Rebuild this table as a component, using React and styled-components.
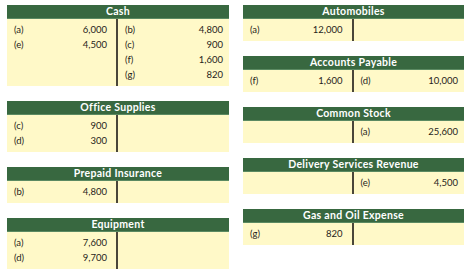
import styled, { createGlobalStyle } from "styled-components";

const GlobalStyle = createGlobalStyle`
  html, body {
    margin: 0;
    padding: 0;
    background: #ffffff;
  }
  body {
    font-family: "Lato", "Open Sans", sans-serif;
  }
`;

const Page = styled.div`
  display: grid;
  grid-template-columns: 222px 221px;
  column-gap: 14px;
  padding: 5px 0 0 7px;
  width: 472px;
  height: 278px;
  box-sizing: border-box;
`;

const Column = styled.div`
  display: flex;
  flex-direction: column;
  gap: 15px;
`;

const Card = styled.div`
  display: flex;
  flex-direction: column;
`;

const Header = styled.div`
  height: 13px;
  line-height: 13px;
  background: #386840;
  border-bottom: 1px solid #5b8a62;
  color: #ffffff;
  font-size: 10.5px;
  font-weight: 700;
  text-align: center;
  letter-spacing: 0.3px;
`;

const Body = styled.div`
  display: grid;
  grid-template-columns: 1fr 1fr;
  background: #fff9c8;
`;

const Side = styled.div`
  padding: 3px ${(p) => (p.$left ? "9px" : "6px")} 4px 7px;
  border-right: ${(p) => (p.$left ? "2px solid #4a463a" : "none")};
  min-height: 15px;
`;

const Row = styled.div`
  display: flex;
  justify-content: space-between;
  height: 15px;
  line-height: 15px;
  font-size: 9.5px;
  color: #1f1e1a;
`;

const entries = (list) =>
  list.map(([label, amount]) => (
    <Row key={label}>
      <span>{label}</span>
      <span>{amount}</span>
    </Row>
  ));

function TAccount({ title, debits = [], credits = [] }) {
  return (
    <Card>
      <Header>{title}</Header>
      <Body>
        <Side $left>{entries(debits)}</Side>
        <Side>{entries(credits)}</Side>
      </Body>
    </Card>
  );
}

export default function App() {
  return (
    <>
      <GlobalStyle />
      <Page>
        <Column>
          <TAccount
            title="Cash"
            debits={[
              ["(a)", "6,000"],
              ["(e)", "4,500"],
            ]}
            credits={[
              ["(b)", "4,800"],
              ["(c)", "900"],
              ["(f)", "1,600"],
              ["(g)", "820"],
            ]}
          />
          <TAccount
            title="Office Supplies"
            debits={[
              ["(c)", "900"],
              ["(d)", "300"],
            ]}
          />
          <TAccount title="Prepaid Insurance" debits={[["(b)", "4,800"]]} />
          <TAccount
            title="Equipment"
            debits={[
              ["(a)", "7,600"],
              ["(d)", "9,700"],
            ]}
          />
        </Column>
        <Column>
          <TAccount title="Automobiles" debits={[["(a)", "12,000"]]} />
          <TAccount
            title="Accounts Payable"
            debits={[["(f)", "1,600"]]}
            credits={[["(d)", "10,000"]]}
          />
          <TAccount title="Common Stock" credits={[["(a)", "25,600"]]} />
          <TAccount
            title="Delivery Services Revenue"
            credits={[["(e)", "4,500"]]}
          />
          <TAccount title="Gas and Oil Expense" debits={[["(g)", "820"]]} />
        </Column>
      </Page>
    </>
  );
}
